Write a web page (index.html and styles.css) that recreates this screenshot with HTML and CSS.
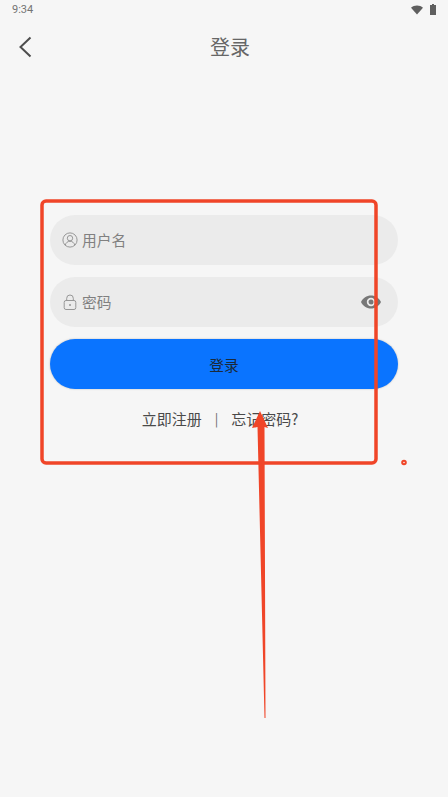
FILE: index.html
```html
<!DOCTYPE html>
<html lang="zh">
<head>
<meta charset="utf-8">
<title>登录</title>
<link rel="stylesheet" href="styles.css">
</head>
<body>
<div class="screen">
  <div class="status">
    <span class="time">9:34</span>
    <span class="status-icons">
      <svg class="wifi" viewBox="0 0 12 9"><path d="M0 2.2C1.6.8 3.7 0 6 0s4.4.8 6 2.2L6 9z"/></svg>
      <svg class="battery" viewBox="0 0 6 11"><path d="M2 0h2v1h2v10H0V1h2z"/></svg>
    </span>
  </div>
  <header class="nav">
    <button class="back" aria-label="返回">
      <svg viewBox="0 0 14 22"><path d="M12.5 1.5 2.5 11l10 9.500"/></svg>
    </button>
    <h1 class="title">登录</h1>
  </header>
  <form class="form">
    <div class="field">
      <svg class="field-icon" viewBox="0 0 16 16"><circle cx="8" cy="8" r="7.100"/><circle cx="8" cy="6.200" r="2.700"/><path d="M3.200 13.200c.7-2.600 2.500-3.900 4.800-3.900s4.100 1.300 4.800 3.900"/></svg>
      <span class="placeholder">用户名</span>
    </div>
    <div class="field">
      <svg class="field-icon" viewBox="0 0 16 16"><rect x="2.200" y="6.500" width="11.600" height="9" rx="1.800"/><path d="M4.700 6.500V4.300a3.300 3.300 0 0 1 6.600 0v2.200"/><circle class="dot" cx="8" cy="11" r="1"/></svg>
      <span class="placeholder">密码</span>
      <svg class="eye" viewBox="0 0 20 14"><path fill-rule="evenodd" d="M10 .5c4.400 0 8 2.600 10 6.500-2 3.900-5.600 6.500-10 6.500S2 10.900 0 7C2 3.100 5.600.5 10 .5zm0 2.300a4.200 4.200 0 1 0 0 8.400 4.200 4.200 0 0 0 0-8.400zm0 1.700a2.500 2.500 0 1 1 0 5 2.500 2.500 0 0 1 0-5z"/></svg>
    </div>
    <button type="button" class="submit">登录</button>
    <div class="links">
      <span>立即注册</span>
      <span class="sep">|</span>
      <span>忘记密码?</span>
    </div>
  </form>
  <svg class="annotation" viewBox="0 0 448 797" aria-hidden="true">
    <rect class="box" x="42" y="201" width="334" height="262" rx="4"/>
    <circle class="speck" cx="404" cy="462.500" r="1.800"/>
    <path class="arrow" d="M260 411 268 428 264.500 427 265.500 718 264.500 718 257.500 427 252 428z"/>
  </svg>
</div>
</body>
</html>
```
FILE: styles.css
```css
* { box-sizing: border-box; }
html, body { margin: 0; padding: 0; }
body {
  width: 448px;
  height: 797px;
  overflow: hidden;
  background: #f6f6f6;
  font-family: "Noto Sans CJK SC", "Noto Sans", sans-serif;
}
.screen {
  position: relative;
  width: 448px;
  height: 797px;
  display: flex;
  flex-direction: column;
}
.status {
  height: 20px;
  padding: 0 12px 1px;
  display: flex;
  align-items: center;
  justify-content: space-between;
}
.time {
  font-family: Roboto, sans-serif;
  font-size: 11px;
  color: #747474;
}
.status-icons {
  display: flex;
  align-items: center;
  gap: 7px;
}
.wifi { width: 12px; height: 10px; fill: #5f5f5f; }
.battery { width: 6px; height: 11px; fill: #5f5f5f; }
.nav {
  height: 55px;
  position: relative;
  display: flex;
  align-items: center;
  justify-content: center;
  padding: 0 0 2px 12px;
}
.back {
  position: absolute;
  left: 18px;
  top: 16px;
  width: 14px;
  height: 22px;
  padding: 0;
  border: 0;
  background: none;
}
.back svg {
  display: block;
  width: 14px;
  height: 22px;
  fill: none;
  stroke: #4d4d4d;
  stroke-width: 2;
}
.title {
  margin: 0;
  font-size: 20px;
  font-weight: 400;
  line-height: 28px;
  color: #666;
}
.form {
  margin-top: 140px;
  padding: 0 50px;
  display: flex;
  flex-direction: column;
  gap: 12px;
}
.field {
  height: 50px;
  border-radius: 25px;
  background: #ebebeb;
  padding: 0 17px 0 12px;
  display: flex;
  align-items: center;
}
.field-icon {
  width: 16px;
  height: 16px;
  margin-right: 4px;
  fill: none;
  stroke: #979797;
  stroke-width: 1;
  flex: none;
}
.field-icon .dot { fill: #979797; stroke: none; }
.placeholder {
  font-size: 14.700px;
  line-height: 20px;
  color: #808080;
}
.eye {
  width: 20px;
  height: 14px;
  margin-left: auto;
  fill: #777;
}
.submit {
  height: 50px;
  border: 0;
  padding: 0;
  border-radius: 25px;
  background: #0a74ff;
  box-shadow: 0 0 2px rgba(0, 0, 0, .25);
  font: inherit;
  font-size: 14.700px;
  color: #1b2a3a;
}
.links {
  margin-top: 5px;
  height: 24px;
  padding-right: 8px;
  display: flex;
  justify-content: center;
  align-items: center;
  gap: 13px;
  font-size: 15px;
  color: #4a4a4a;
}
.sep { font-size: 13px; color: #666; }
.annotation {
  position: absolute;
  left: 0;
  top: 0;
  width: 448px;
  height: 797px;
  pointer-events: none;
}
.box { fill: none; stroke: #f04528; stroke-width: 3.500; }
.speck { fill: none; stroke: #f04528; stroke-width: 2; }
.arrow { fill: #f04528; }
```
